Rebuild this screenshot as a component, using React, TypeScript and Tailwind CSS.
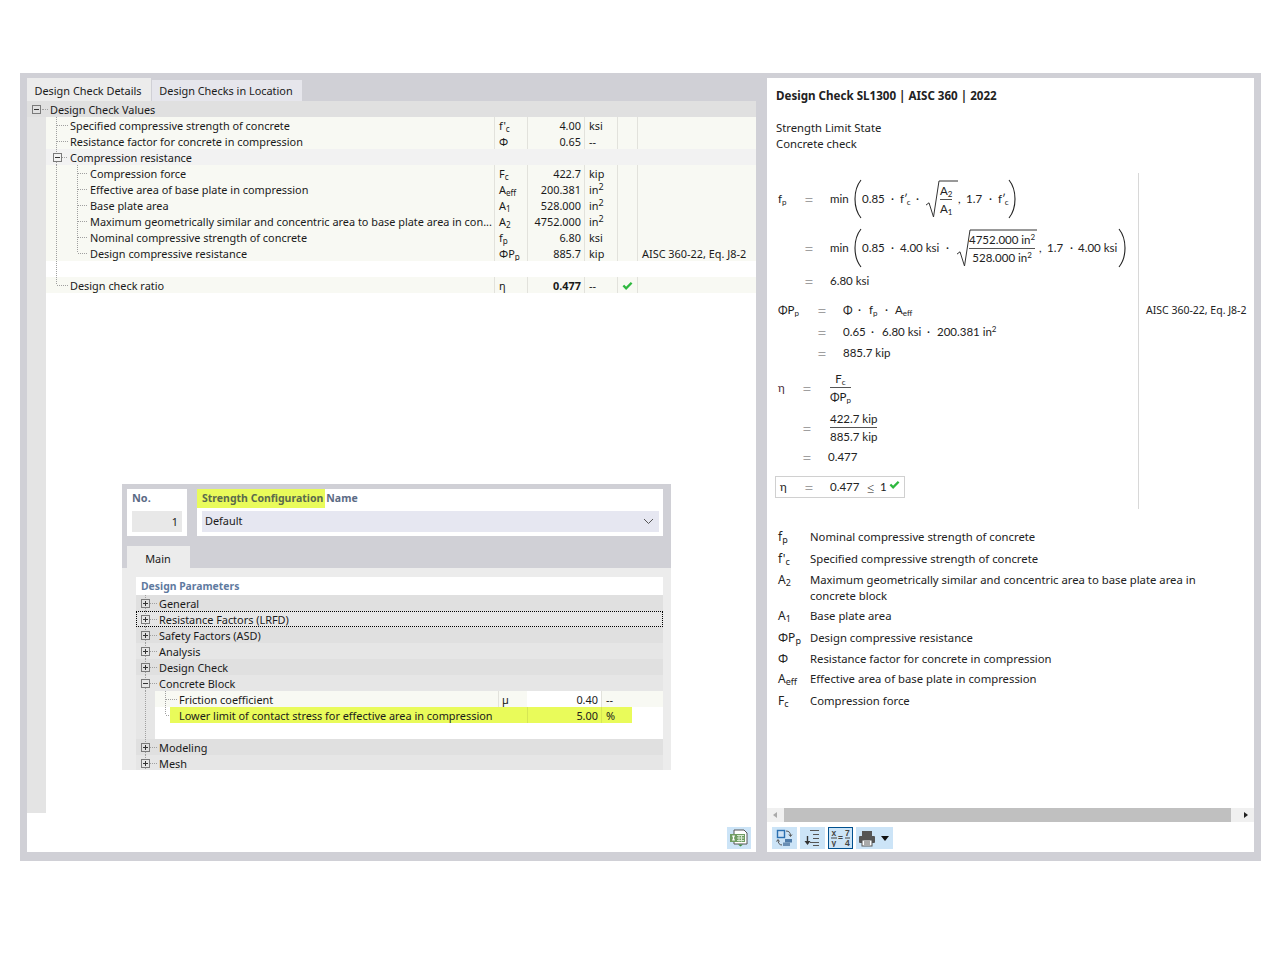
import type { ReactNode } from 'react';

const DOTS = '#a0a0a0';

function ExpandBox({ open = false }: { open?: boolean }) {
  return (
    <svg width="9" height="9" viewBox="0 0 9 9" className="block">
      <rect x="0.5" y="0.5" width="8" height="8" fill="none" stroke="#7a7a7a" />
      <path d={open ? 'M2 4.5H7' : 'M2 4.5H7M4.5 2V7'} stroke="#333" />
    </svg>
  );
}

function Lines({ d }: { d: string }) {
  return (
    <svg className="absolute left-0 top-0 h-4 w-[60px]" viewBox="0 0 60 16">
      <path d={d} fill="none" stroke={DOTS} strokeDasharray="1 1" />
    </svg>
  );
}

function Check({ size = 11 }: { size?: number }) {
  return (
    <svg width={size} height={size} viewBox="0 0 12 12">
      <path d="M1.5 6L4.5 9L10.5 3" fill="none" stroke="#2eb83f" strokeWidth="2.6" />
    </svg>
  );
}

type Row = {
  name?: string;
  lines?: string;
  sym?: ReactNode;
  value?: string;
  unit?: ReactNode;
  note?: string;
  deep?: boolean;
  bold?: boolean;
  ok?: boolean;
};

const sq = (
  <>
    in<sup className="text-[9px]">2</sup>
  </>
);

const V = 'M10.5 0V16M11 8.5H22';
const V2 = 'M10.5 0V16M31.5 0V16M32 8.5H42';

const rows: Row[] = [
  { name: 'Specified compressive strength of concrete', lines: V, sym: <>f'<sub>c</sub></>, value: '4.00', unit: 'ksi' },
  { name: 'Resistance factor for concrete in compression', lines: V, sym: 'Φ', value: '0.65', unit: '--' },
  { name: 'Compression resistance', lines: 'M10.5 0V3M10.5 13V16M16 8.5H22' },
  { name: 'Compression force', lines: V2, deep: true, sym: <>F<sub>c</sub></>, value: '422.7', unit: 'kip' },
  { name: 'Effective area of base plate in compression', lines: V2, deep: true, sym: <>A<sub>eff</sub></>, value: '200.381', unit: sq },
  { name: 'Base plate area', lines: V2, deep: true, sym: <>A<sub>1</sub></>, value: '528.000', unit: sq },
  { name: 'Maximum geometrically similar and concentric area to base plate area in con...', lines: V2, deep: true, sym: <>A<sub>2</sub></>, value: '4752.000', unit: sq },
  { name: 'Nominal compressive strength of concrete', lines: V2, deep: true, sym: <>f<sub>p</sub></>, value: '6.80', unit: 'ksi' },
  { name: 'Design compressive resistance', lines: 'M10.5 0V16M31.5 0V8M32 8.5H42', deep: true, sym: <>ΦP<sub>p</sub></>, value: '885.7', unit: 'kip', note: 'AISC 360-22, Eq. J8-2' },
];

function ValueRow({ row }: { row: Row }) {
  return (
    <div className="flex h-4 bg-[#f8f9f3] leading-[18px]">
      <div className={row.deep ? 'relative w-[448px] whitespace-nowrap pl-[44px]' : 'relative w-[448px] whitespace-nowrap pl-[24px]'}>
        {row.lines && <Lines d={row.lines} />}
        {row.name}
      </div>
      <div className="w-[33px] border-l border-[#e2e2dc] pl-[4px]">{row.sym}</div>
      <div className={row.bold ? 'w-[57px] border-l border-[#e2e2dc] pr-[3px] text-right font-bold' : 'w-[57px] border-l border-[#e2e2dc] pr-[3px] text-right'}>{row.value}</div>
      <div className="w-[33px] border-l border-[#e2e2dc] pl-[4px]">{row.unit}</div>
      <div className="flex w-5 items-center justify-center border-l border-[#e2e2dc]">{row.ok && <Check />}</div>
      <div className="flex-1 border-l border-[#e2e2dc] pl-[4px] whitespace-nowrap">{row.note}</div>
    </div>
  );
}

function DetailsTable() {
  return (
    <div>
      {rows.slice(0, 2).map((r) => (
        <ValueRow key={r.name} row={r} />
      ))}
      <div className="relative h-4 bg-[#f2f2f2] pl-[24px] leading-[18px]">
        <Lines d={rows[2].lines as string} />
        <span className="absolute left-[7px] top-[4px]">
          <ExpandBox open />
        </span>
        {rows[2].name}
      </div>
      {rows.slice(3).map((r) => (
        <ValueRow key={r.name} row={r} />
      ))}
      <div className="relative h-4 bg-white">
        <Lines d="M10.5 0V16" />
      </div>
      <ValueRow row={{ name: 'Design check ratio', lines: 'M10.5 0V8M11 8.5H22', sym: 'η', value: '0.477', unit: '--', ok: true, bold: true }} />
    </div>
  );
}

const params = ['General', 'Resistance Factors (LRFD)', 'Safety Factors (ASD)', 'Analysis', 'Design Check'];

function ParamRow({ label, dark, open, focus }: { label: string; dark: boolean; open?: boolean; focus?: boolean }) {
  return (
    <div className={dark ? 'relative h-4 bg-[#e0e0e0] pl-[23px] leading-[18px]' : 'relative h-4 bg-[#e6e6e6] pl-[23px] leading-[18px]'}>
      <Lines d="M9.5 0V3M9.5 13V16M14 8.5H21" />
      <span className="absolute left-[5px] top-[4px]">
        <ExpandBox open={open} />
      </span>
      {label}
      {focus && <span className="absolute inset-0 border border-dotted border-black" />}
    </div>
  );
}

function ConfigDialog() {
  return (
    <div className="ml-[76px] mt-[191px] h-[286px] w-[549px] overflow-hidden bg-[#ececec]">
      <div className="h-[84px] bg-[#d0d0d6] pl-[5px] pt-[5px]">
        <div className="flex h-[47px]">
          <div className="h-[47px] w-[60px] bg-white pl-[5px]">
            <div className="h-[19px] font-bold leading-[18px] text-[#5b6b85]">No.</div>
            <div className="mt-[3px] h-[21px] w-[50px] bg-[#e8e8e8] pr-[4px] text-right leading-[22px]">1</div>
          </div>
          <div className="ml-[10px] h-[47px] w-[466px] bg-white">
            <div className="h-[19px] whitespace-nowrap text-[10.5px] font-bold leading-[18px] text-[#5b6b85]">
              <span className="inline-block h-[19px] bg-[#e9fb5a] pl-[5px] pr-[2px] text-[#5a6a4c]">Strength Configuration</span>
              <span className="ml-px">Name</span>
            </div>
            <div className="ml-[5px] mt-[3px] flex h-[21px] w-[457px] items-center justify-between bg-[#e6e7f1] pl-[3px] pr-[5px]">
              Default
              <svg width="11" height="7" viewBox="0 0 11 7">
                <path d="M1 1L5.5 5.5L10 1" fill="none" stroke="#555" />
              </svg>
            </div>
          </div>
        </div>
        <div className="mt-[10px] flex h-[22px] w-[63px] items-center justify-center bg-[#ececec] pr-px pt-[5px]">Main</div>
      </div>
      <div className="ml-[14px] mt-[9px] w-[527px] bg-white">
        <div className="h-[18px] pl-[5px] text-[10.4px] font-bold leading-[18px] text-[#5f7a9f]">Design Parameters</div>
        {params.map((p, i) => (
          <ParamRow key={p} label={p} dark={i % 2 === 0} focus={i === 1} />
        ))}
        <ParamRow label="Concrete Block" dark={false} open />
        <div className="relative h-[48px]">
          <svg className="absolute left-0 top-0 h-[48px] w-[19px]" viewBox="0 0 19 48">
            <rect width="19" height="48" fill="#e6e6e6" />
            <path d="M9.5 0V48" stroke={DOTS} strokeDasharray="1 1" />
          </svg>
          <div className="ml-[19px]">
            <div className="relative flex h-4 bg-[#f8f9f3] leading-[18px]">
              <Lines d="M10.5 0V16M11 8.5H22" />
              <div className="w-[343px] pl-[24px]">Friction coefficient</div>
              <div className="w-[29px] border-l border-[#e2e2dc] pl-[3px]">µ</div>
              <div className="w-[74px] bg-white pr-[3px] text-right">0.40</div>
              <div className="flex-1 border-l border-[#e2e2dc] pl-[4px]">--</div>
            </div>
            <div className="relative flex h-4 bg-white leading-[18px]">
              <Lines d="M10.5 0V8M11 8.5H15" />
              <div className="ml-[15px] flex w-[462px] bg-[#e9fb5a]">
                <div className="w-[357px] whitespace-nowrap pl-[9px]">Lower limit of contact stress for effective area in compression</div>
                <div className="w-[74px] border-l border-[#d6e654] pr-[3px] text-right">5.00</div>
                <div className="flex-1 border-l border-[#d6e654] pl-[4px]">%</div>
              </div>
            </div>
          </div>
        </div>
        <ParamRow label="Modeling" dark />
        <ParamRow label="Mesh" dark={false} />
      </div>
    </div>
  );
}

function LeftPanel() {
  return (
    <div className="flex h-[774px] w-[729px] flex-col bg-white text-[10.9px] text-[#1a1a1a]">
      <div className="flex h-[23px] items-end bg-[#d0d0d6]">
        <div className="flex h-[23px] w-[124px] items-center justify-center bg-[#ececec] pr-[2px] pt-[3px]">Design Check Details</div>
        <div className="ml-px flex h-[21px] w-[150px] items-center justify-center bg-[#e6e6ec] pr-[2px] pt-[2px]">Design Checks in Location</div>
      </div>
      <div className="relative h-4 bg-[#e0e0e0] pl-[23px] leading-[18px]">
        <span className="absolute left-[5px] top-[4px]">
          <ExpandBox open />
        </span>
        <span className="absolute left-[15px] top-[8px] w-[6px] border-t border-dotted border-[#a0a0a0]" />
        Design Check Values
      </div>
      <div className="flex h-[696px]">
        <div className="w-[19px] bg-[#e4e4e4]" />
        <div className="flex-1">
          <DetailsTable />
          <ConfigDialog />
        </div>
      </div>
      <div className="flex flex-1 items-end justify-end pb-[3px] pr-[5px]">
        <div className="flex h-[22px] w-[24px] items-center justify-center bg-[#cce4f7]">
          <svg width="20" height="18" viewBox="0 0 20 18">
            <path d="M5 1H15L18 4V15H5Z" fill="#fff" stroke="#555" />
            <rect x="1" y="5" width="15" height="8" fill="#6f9d62" />
            <path d="M3 6.5H6L5 9L6 11.5H3L4 9Z" fill="#fff" />
            <path d="M8 6.5H15M8 9H15M8 11.5H15M10 6V12.5M12.5 6V12.5" stroke="#d8e8d2" />
            <path d="M9 15.5H14L11.5 17.5Z" fill="#3d8a3d" />
          </svg>
        </div>
      </div>
    </div>
  );
}

function Frac({ top, bottom, className }: { top: ReactNode; bottom: ReactNode; className?: string }) {
  return (
    <div className={`flex flex-col items-center text-center leading-[17px] ${className ?? ''}`}>
      <div className="whitespace-nowrap">{top}</div>
      <div className="w-full border-t border-[#555] whitespace-nowrap">{bottom}</div>
    </div>
  );
}

function Paren({ right = false }: { right?: boolean }) {
  return (
    <svg width="8" height="40" viewBox="0 0 8 40" className="shrink-0">
      <path d={right ? 'M1 1C9 11 9 29 1 39' : 'M7 1C-1 11 -1 29 7 39'} fill="none" stroke="#222" strokeWidth="1.1" />
    </svg>
  );
}

function Root({ w, box, children }: { w: number; box: string; children: ReactNode }) {
  const h = 38;
  return (
    <div className={`relative flex items-center ${box}`}>
      <svg className="absolute left-0 top-0" width={w} height={h} viewBox={`0 0 ${w} ${h}`}>
        <path d={`M0 ${h * 0.66}L3 ${h * 0.6}L7.5 ${h - 1}L13 1H${w}`} fill="none" stroke="#333" />
      </svg>
      {children}
    </div>
  );
}

const Eq = ({ w }: { w: string }) => <div className={`${w} text-[17px] font-light leading-none text-[#555]`}>=</div>;

function FPrime() {
  return (
    <span className="whitespace-nowrap">
      f′<sub className="-ml-px text-[8px]">c</sub>
    </span>
  );
}

function MathBlock() {
  return (
    <div className="mt-[21px] flex h-[336px] text-[11.5px] leading-[18px] text-[#222] font-['Lato',sans-serif]">
      <div className="w-[363px] border-r border-[#d8d8d8] pl-[2px] pt-[2px]">
        <div className="flex h-[48px] items-center">
          <div className="w-[26px]">f<sub className="text-[8px]">p</sub></div>
          <Eq w="w-[26px]" />
          <div className="w-[24px]">min</div>
          <Paren />
          <span className="w-[29px]">0.85</span>
          <span className="w-[9px]">·</span>
          <span className="w-[16px]"><FPrime /></span>
          <span className="w-[10px]">·</span>
          <Root w={32} box="h-[38px] w-[32px]">
            <Frac top={<>A<sub className="text-[8px]">2</sub></>} bottom={<>A<sub className="text-[8px]">1</sub></>} className="ml-[14px]" />
          </Root>
          <span className="w-[8px]">,</span>
          <span className="w-[23px]">1.7</span>
          <span className="w-[9px]">·</span>
          <span className="w-[10px]"><FPrime /></span>
          <Paren right />
        </div>
        <div className="mt-px flex h-[48px] items-center whitespace-nowrap">
          <div className="w-[26px]" />
          <Eq w="w-[26px]" />
          <div className="w-[24px]">min</div>
          <Paren />
          <span className="w-[29px]">0.85</span>
          <span className="w-[9px]">·</span>
          <span className="w-[46px]">4.00 ksi</span>
          <span className="w-[11px]">·</span>
          <Root w={80} box="h-[38px] w-[80px]">
            <Frac top={<>4752.000 in<sup className="text-[8px]">2</sup></>} bottom={<>528.000 in<sup className="text-[8px]">2</sup></>} className="ml-[12px]" />
          </Root>
          <span className="ml-[2px] w-[8px]">,</span>
          <span className="w-[23px]">1.7</span>
          <span className="w-[8px]">·</span>
          <span className="w-[40px]">4.00 ksi</span>
          <Paren right />
        </div>
        <div className="flex h-[18px] items-center">
          <div className="w-[26px]" />
          <Eq w="w-[26px]" />
          <div>6.80 ksi</div>
        </div>
        <div className="mt-[11px] flex h-[18px] items-center">
          <div className="w-[39px]">ΦP<sub className="text-[8px]">p</sub></div>
          <Eq w="w-[26px]" />
          <span className="w-[15px]">Φ</span>
          <span className="w-[11px]">·</span>
          <span className="w-[16px]">f<sub className="text-[8px]">p</sub></span>
          <span className="w-[10px]">·</span>
          <span>A<sub className="text-[8px]">eff</sub></span>
        </div>
        <div className="mt-[4px] flex h-[18px] items-center">
          <div className="w-[39px]" />
          <Eq w="w-[26px]" />
          <span className="w-[28px]">0.65</span>
          <span className="w-[11px]">·</span>
          <span className="w-[45px]">6.80 ksi</span>
          <span className="w-[10px]">·</span>
          <span>200.381 in<sup className="text-[8px]">2</sup></span>
        </div>
        <div className="mt-[3px] flex h-[18px] items-center">
          <div className="w-[39px]" />
          <Eq w="w-[26px]" />
          <span>885.7 kip</span>
        </div>
        <div className="mt-[8px] flex h-[36px] items-center">
          <div className="w-[24px] text-[#4a2a3a]">η</div>
          <Eq w="w-[28px]" />
          <Frac top={<>F<sub className="text-[8px]">c</sub></>} bottom={<>ΦP<sub className="text-[8px]">p</sub></>} className="-mt-[2px]" />
        </div>
        <div className="mt-[3px] flex h-[38px] items-center">
          <div className="w-[24px]" />
          <Eq w="w-[28px]" />
          <Frac top="422.7 kip" bottom="885.7 kip" className="-mt-[2px]" />
        </div>
        <div className="mt-px flex h-[18px] items-center">
          <div className="w-[24px]" />
          <Eq w="w-[26px]" />
          <span>0.477</span>
        </div>
        <div className="-ml-[3px] mt-[10px] flex h-[22px] w-[130px] items-center border border-[#d0d0d0] pl-[4px]">
          <div className="w-[24px]">η</div>
          <Eq w="w-[26px]" />
          <span className="w-[36px]">0.477</span>
          <span className="w-[14px] text-[16px] font-light">≤</span>
          <span className="w-[9px]">1</span>
          <span className="-mt-[6px]">
            <Check />
          </span>
        </div>
      </div>
      <div className="whitespace-nowrap pl-[7px] pt-[128px] text-[10.5px] font-['Noto_Sans',sans-serif]">AISC 360-22, Eq. J8-2</div>
    </div>
  );
}

const legend: { sym: ReactNode; text: ReactNode; h: string }[] = [
  { sym: <>f<sub>p</sub></>, text: 'Nominal compressive strength of concrete', h: 'h-[22px]' },
  { sym: <>f'<sub>c</sub></>, text: 'Specified compressive strength of concrete', h: 'h-[21px]' },
  { sym: <>A<sub>2</sub></>, text: 'Maximum geometrically similar and concentric area to base plate area in concrete block', h: 'h-[36px]' },
  { sym: <>A<sub>1</sub></>, text: 'Base plate area', h: 'h-[22px]' },
  { sym: <>ΦP<sub>p</sub></>, text: 'Design compressive resistance', h: 'h-[21px]' },
  { sym: 'Φ', text: 'Resistance factor for concrete in compression', h: 'h-[20px]' },
  { sym: <>A<sub>eff</sub></>, text: 'Effective area of base plate in compression', h: 'h-[22px]' },
  { sym: <>F<sub>c</sub></>, text: 'Compression force', h: 'h-[21px]' },
];

function ToolbarIcons() {
  return (
    <div className="flex h-[22px] items-center gap-[3px] pl-[5px]">
      <div className="flex h-[22px] w-[25px] items-center justify-center bg-[#cce4f7]">
        <svg width="20" height="18" viewBox="0 0 20 18">
          <rect x="2.5" y="1.5" width="7" height="7" fill="#cfe3f5" stroke="#2a6fb0" strokeWidth="1.4" />
          <rect x="10" y="10" width="7" height="3.5" fill="#4f7ba8" />
          <rect x="8" y="13.5" width="7" height="3.5" fill="#6a8fb5" />
          <path d="M11 2C14 2 15.5 3.5 15.5 7M14 5.5L15.5 7.5L17 5.5M7 16C4.5 16 3 14 3 11M1.5 12.5L3 10.5L4.5 12.5" fill="none" stroke="#555" />
        </svg>
      </div>
      <div className="flex h-[22px] w-[25px] items-center justify-center bg-[#cce4f7]">
        <svg width="18" height="18" viewBox="0 0 18 18">
          <path d="M6 1.5H15M9 5.5H15M9 9.5H15M6 13.5H15M9 16.5H15" stroke="#555" />
          <path d="M3.5 7V13" stroke="#333" strokeWidth="1.4" />
          <path d="M0.5 12H6.5L3.5 16Z" fill="#333" />
        </svg>
      </div>
      <div className="flex h-[22px] w-[25px] items-center justify-center border border-[#00508f] bg-[#cce4f7]">
        <svg width="21" height="18" viewBox="0 0 21 18" className="font-['Liberation_Sans',sans-serif] font-bold">
          <text x="1.5" y="7" fontSize="8.5" fill="#444">x</text>
          <text x="1.5" y="16.5" fontSize="8.5" fill="#444">y</text>
          <path d="M1 9H7M15 9H20" stroke="#444" />
          <text x="8" y="12" fontSize="8.5" fill="#444">=</text>
          <text x="15" y="7" fontSize="8.5" fill="#444">7</text>
          <text x="15" y="16.5" fontSize="8.5" fill="#444">4</text>
        </svg>
      </div>
      <div className="flex h-[22px] w-[37px] items-center gap-[5px] bg-[#cce4f7] pl-[2px]">
        <svg width="18" height="17" viewBox="0 0 18 17">
          <rect x="4" y="1" width="10" height="5" fill="#555" />
          <rect x="1" y="6" width="16" height="7" rx="1" fill="#555" />
          <rect x="4" y="10" width="10" height="6" fill="#fff" stroke="#555" />
          <path d="M6 12H12M6 14H12" stroke="#555" />
        </svg>
        <svg width="8" height="5" viewBox="0 0 8 5">
          <path d="M0 0H8L4 5Z" fill="#111" />
        </svg>
      </div>
    </div>
  );
}

function RightPanel() {
  return (
    <div className="flex h-[774px] w-[487px] flex-col bg-white text-[11.3px] text-[#222]">
      <div className="flex-1 overflow-hidden pl-[9px]">
        <div className="pt-[9px] text-[11.6px] font-bold leading-[18px]">Design Check SL1300 | AISC 360 | 2022</div>
        <div className="mt-[15px] leading-4">Strength Limit State</div>
        <div className="leading-4">Concrete check</div>
        <MathBlock />
        <div className="mt-[20px] pl-[2px]">
          {legend.map((l, i) => (
            <div key={i} className={`flex ${l.h} leading-4`}>
              <div className="w-[32px] shrink-0 text-[12px]">{l.sym}</div>
              <div className="w-[400px]">{l.text}</div>
            </div>
          ))}
        </div>
      </div>
      <div className="flex h-[14px] items-center bg-[#f0f0f0]">
        <svg width="17" height="14" viewBox="0 0 17 14" className="shrink-0">
          <path d="M10 4V10L6 7Z" fill="#aaa" />
        </svg>
        <div className="h-[14px] w-[447px] bg-[#c0c0c0]" />
        <svg width="23" height="14" viewBox="0 0 23 14" className="shrink-0">
          <path d="M13 4V10L17 7Z" fill="#222" />
        </svg>
      </div>
      <div className="mt-[5px] h-[25px]">
        <ToolbarIcons />
      </div>
    </div>
  );
}

export default function App() {
  return (
    <div className="h-[960px] w-[1280px] bg-white pl-[20px] pt-[73px] font-['Noto_Sans',sans-serif]">
      <div className="flex h-[788px] w-[1241px] gap-[11px] bg-[#d0d0d6] pl-[7px] pt-[5px]">
        <LeftPanel />
        <RightPanel />
      </div>
    </div>
  );
}
